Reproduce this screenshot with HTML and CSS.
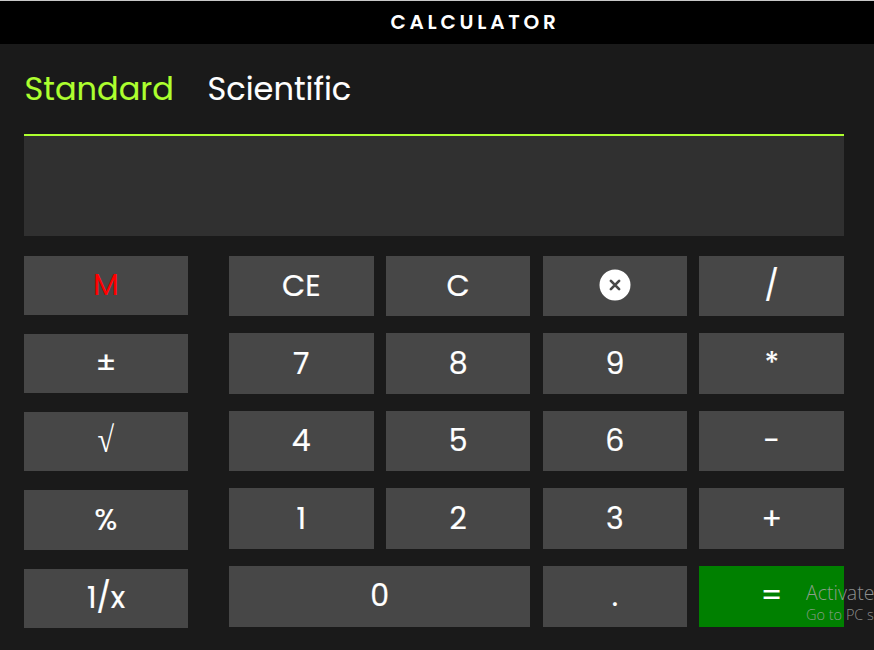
FILE: index.html
```html
<!DOCTYPE html>
<html lang="en">
<head>
<meta charset="utf-8">
<title>Calculator</title>
<link rel="stylesheet" href="styles.css">
</head>
<body>
<header class="header"><h1 class="title">CALCULATOR</h1></header>
<main class="calculator">
  <nav class="tabs">
    <a class="tab active"><span>Standard</span></a>
    <a class="tab"><span>Scientific</span></a>
  </nav>
  <div class="display"></div>
  <div class="keys">
    <div class="side">
      <button class="key memory"><span>M</span></button>
      <button class="key"><span>±</span></button>
      <button class="key root"><span>√</span></button>
      <button class="key"><span>%</span></button>
      <button class="key"><span>1/x</span></button>
    </div>
    <div class="pad">
      <button class="key"><span>CE</span></button>
      <button class="key"><span>C</span></button>
      <button class="key" aria-label="Backspace">
        <svg class="icon" viewBox="0 0 32 32"><circle cx="16" cy="16" r="15.5" fill="#fff"/><path d="M11.9 11.9l8.2 8.2M20.1 11.9l-8.2 8.2" stroke="#474747" stroke-width="2.7" stroke-linecap="round"/></svg>
      </button>
      <button class="key"><span>/</span></button>
      <button class="key"><span>7</span></button>
      <button class="key"><span>8</span></button>
      <button class="key"><span>9</span></button>
      <button class="key"><span>*</span></button>
      <button class="key"><span>4</span></button>
      <button class="key"><span>5</span></button>
      <button class="key"><span>6</span></button>
      <button class="key"><span>-</span></button>
      <button class="key"><span>1</span></button>
      <button class="key"><span>2</span></button>
      <button class="key"><span>3</span></button>
      <button class="key"><span>+</span></button>
      <button class="key zero"><span>0</span></button>
      <button class="key"><span>.</span></button>
      <button class="key equals"><span>=</span></button>
    </div>
  </div>
</main>
<aside class="notice">
  <div class="notice-title">Activate</div>
  <div class="notice-text">Go to PC s</div>
</aside>
</body>
</html>
```
FILE: styles.css
```css
* { box-sizing: border-box; }
html, body { height: 100%; }
body {
  margin: 0;
  overflow: hidden;
  position: relative;
  background: #1a1a1a;
  color: #fff;
  font-family: Poppins, Inter, "Liberation Sans", sans-serif;
}
.header {
  height: 44px;
  border-top: 1px solid #c8c8c8;
  background: #000;
  display: flex;
  align-items: center;
  justify-content: center;
}
.title {
  margin: 0 0 1px 76px;
  font-size: 20px;
  font-weight: 600;
  line-height: 30px;
  letter-spacing: 3.75px;
}
.calculator { padding: 0 30px 0 24px; }
.tabs {
  height: 90px;
  display: flex;
  gap: 33px;
  font-size: 32px;
  line-height: 90px;
  padding-left: 0.5px;
}
.tab { width: 150px; white-space: nowrap; -webkit-text-stroke: 0.1px currentColor; }
.active { color: #adff2f; }
.display {
  height: 102px;
  border-top: 2px solid #adff2f;
  background: #303030;
}
.keys {
  display: grid;
  grid-template-columns: 164px 615px;
  column-gap: 41px;
  padding-top: 20px;
  align-items: start;
}
.side {
  display: grid;
  grid-auto-rows: 59.1px;
  row-gap: 19.05px;
}
.pad {
  display: grid;
  grid-template-columns: repeat(4, 1fr);
  grid-template-rows: repeat(4, 60.4px) 61px;
  gap: 17.1px 12.2px;
}
.key {
  border: 0;
  padding: 0;
  background: #474747;
  color: #fff;
  font: inherit;
  font-size: 30px;
  line-height: 1;
  -webkit-text-stroke: 0.2px currentColor;
  display: flex;
  align-items: center;
  justify-content: center;
}
.memory { color: #f00; -webkit-text-stroke: 0; padding-bottom: 1px; }
.root {
  font-family: "Liberation Serif", serif;
  font-size: 36px;
  -webkit-text-stroke: 0;
  padding-bottom: 4px;
}
.root span { transform: scaleX(0.84); }
.zero { grid-column: span 2; }
.equals { background: #008000; }
.icon { width: 32px; height: 32px; margin-bottom: 3px; }
.notice {
  position: absolute;
  left: 806px;
  top: 581px;
  white-space: nowrap;
  font-family: "Segoe UI", "Open Sans", sans-serif;
  font-weight: 300;
  color: rgba(165, 165, 165, 0.85);
}
.notice-title { font-size: 19.5px; line-height: 24px; }
.notice-text { font-size: 14.5px; line-height: 20px; }
```
